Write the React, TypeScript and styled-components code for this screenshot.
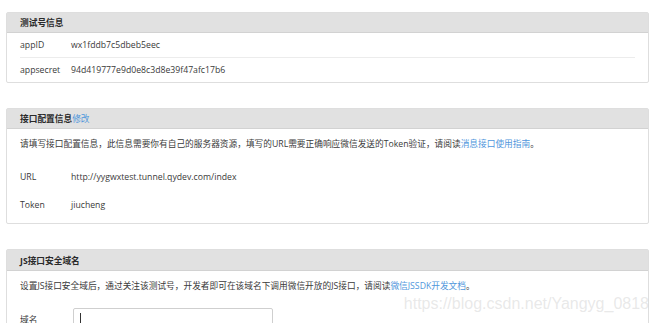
import React from "react";
import styled, { createGlobalStyle } from "styled-components";

const GlobalStyle = createGlobalStyle`
  html, body {
    margin: 0;
    padding: 0;
    background: #fff;
  }
  body {
    font-family: "Open Sans", "Noto Sans CJK SC", sans-serif;
    font-size: 8.7px;
    color: #3a3a3a;
  }
`;

const Page = styled.div`
  position: relative;
  width: 658px;
  height: 323px;
  overflow: hidden;
  box-sizing: border-box;
  padding: 12px 9px 0 6px;
  display: flex;
  flex-direction: column;
  gap: 25px;
`;

const Panel = styled.section`
  border: 1px solid #dedede;
  border-radius: 2px;
  background: #fff;
  flex-shrink: 0;
`;

const PanelHeader = styled.div<{ tall?: boolean }>`
  height: ${({ tall }) => (tall ? "20px" : "19px")};
  display: flex;
  align-items: center;
  padding: 0 13px;
  background: #e1e1e1;
  border-bottom: 1px solid #d2d2d2;
  font-weight: bold;
  color: #2a2a2a;
`;

const Link = styled.a`
  color: #4f96dc;
  text-decoration: none;
  font-weight: normal;
`;

const KVList = styled.div`
  padding: 0 13px;
`;

const KVRow = styled.div<{ divided?: boolean }>`
  height: 24px;
  display: flex;
  align-items: center;
  border-bottom: ${({ divided }) => (divided ? "1px solid #ececec" : "none")};
`;

const Label = styled.span`
  width: 51px;
  flex-shrink: 0;
`;

const Value = styled.span``;

const PanelBody = styled.div`
  padding: 5px 13px 7px;
  display: flex;
  flex-direction: column;
`;

const Paragraph = styled.p`
  margin: 0;
  height: 20px;
  line-height: 20px;
  white-space: nowrap;
`;

const FieldList = styled.div`
  margin-top: 12px;
  display: flex;
  flex-direction: column;
  gap: 6px;
`;

const Field = styled.div`
  height: 22px;
  display: flex;
  align-items: center;
`;

const InputBox = styled.div`
  width: 200px;
  height: 22px;
  box-sizing: border-box;
  border: 1px solid #cfcfcf;
  border-radius: 2px;
  display: flex;
  align-items: center;
  padding-left: 6px;
  margin-left: 2px;
`;

const Caret = styled.span`
  width: 1px;
  height: 12px;
  background: #333;
`;

const Watermark = styled.div`
  position: absolute;
  right: 9px;
  top: 295px;
  font-family: "Liberation Sans", Arial, sans-serif;
  font-size: 16px;
  color: rgba(205, 205, 205, 0.45);
  white-space: nowrap;
  pointer-events: none;
`;

export default function App() {
  return (
    <>
      <GlobalStyle />
      <Page>
        <Panel>
          <PanelHeader>测试号信息</PanelHeader>
          <KVList>
            <KVRow divided>
              <Label>appID</Label>
              <Value>wx1fddb7c5dbeb5eec</Value>
            </KVRow>
            <KVRow>
              <Label>appsecret</Label>
              <Value>94d419777e9d0e8c3d8e39f47afc17b6</Value>
            </KVRow>
          </KVList>
        </Panel>

        <Panel>
          <PanelHeader>
            接口配置信息<Link href="#">修改</Link>
          </PanelHeader>
          <PanelBody>
            <Paragraph>
              请填写接口配置信息，此信息需要你有自己的服务器资源，填写的URL需要正确响应微信发送的Token验证，请阅读
              <Link href="#">消息接口使用指南</Link>。
            </Paragraph>
            <FieldList>
              <Field>
                <Label>URL</Label>
                <Value>http://yygwxtest.tunnel.qydev.com/index</Value>
              </Field>
              <Field>
                <Label>Token</Label>
                <Value>jiucheng</Value>
              </Field>
            </FieldList>
          </PanelBody>
        </Panel>

        <Panel>
          <PanelHeader tall>JS接口安全域名</PanelHeader>
          <PanelBody>
            <Paragraph>
              设置JS接口安全域后，通过关注该测试号，开发者即可在该域名下调用微信开放的JS接口，请阅读
              <Link href="#">微信JSSDK开发文档</Link>。
            </Paragraph>
            <FieldList>
              <Field>
                <Label>域名</Label>
                <InputBox>
                  <Caret />
                </InputBox>
              </Field>
            </FieldList>
          </PanelBody>
        </Panel>
        <Watermark>https://blog.csdn.net/Yangyg_0818</Watermark>
      </Page>
    </>
  );
}
